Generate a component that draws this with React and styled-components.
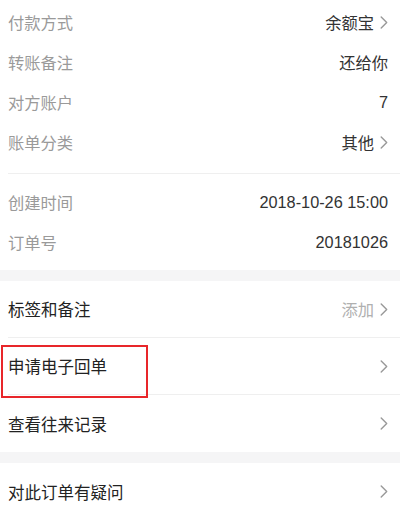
import React from 'react';
import styled, { createGlobalStyle } from 'styled-components';

const GlobalStyle = createGlobalStyle`
  html, body {
    margin: 0;
    padding: 0;
    background: #fff;
    font-family: "Liberation Sans", "Noto Sans CJK SC", sans-serif;
    -webkit-font-smoothing: antialiased;
  }
`;

const Page = styled.div`
  width: 400px;
  height: 520px;
  overflow: hidden;
  background: #fff;
`;

const InfoGroup = styled.div`
  padding: ${({ top }) => top}px 0 ${({ bottom }) => bottom}px;
  border-bottom: ${({ divider }) => (divider ? '1px solid #efefef' : 'none')};
  margin-left: 8px;
`;

const InfoRow = styled.div`
  display: flex;
  align-items: center;
  justify-content: space-between;
  height: 40px;
  padding-right: 12px;
`;

const InfoLabel = styled.span`
  font-size: 16.3px;
  color: #9a9a9a;
`;

const InfoValue = styled.span`
  display: flex;
  align-items: center;
  gap: 6px;
  font-size: 16.3px;
  color: #333;
`;

const Band = styled.div`
  height: 11px;
  background: #f5f5f6;
`;

const ActionRow = styled.div`
  position: relative;
  display: flex;
  align-items: center;
  justify-content: space-between;
  height: 57px;
  margin-left: 8px;
  padding-right: 12px;
  border-bottom: ${({ divider }) => (divider ? '1px solid #efefef' : 'none')};
  box-sizing: border-box;
`;

const ActionLabel = styled.span`
  font-size: 16.5px;
  color: #222;
`;

const Hint = styled.span`
  display: flex;
  align-items: center;
  gap: 6px;
  font-size: 16.3px;
  color: #b0b0b0;
`;

const Highlight = styled.div`
  position: absolute;
  left: -7px;
  top: 7px;
  width: 147px;
  height: 53px;
  border: 2px solid #e8262a;
  box-sizing: border-box;
  pointer-events: none;
`;

const Chevron = () => (
  <svg width="8" height="13" viewBox="0 0 8 13" fill="none">
    <path d="M1.2 1 L6.7 6.5 L1.2 12" stroke="#999" strokeWidth="1.4" strokeLinecap="round" strokeLinejoin="round" />
  </svg>
);

const payment = [
  { label: '付款方式', value: '余额宝', arrow: true },
  { label: '转账备注', value: '还给你' },
  { label: '对方账户', value: '7' },
  { label: '账单分类', value: '其他', arrow: true },
];

const order = [
  { label: '创建时间', value: '2018-10-26 15:00' },
  { label: '订单号', value: '20181026' },
];

const Info = ({ label, value, arrow }) => (
  <InfoRow>
    <InfoLabel>{label}</InfoLabel>
    <InfoValue>
      {value}
      {arrow && <Chevron />}
    </InfoValue>
  </InfoRow>
);

export default function App() {
  return (
    <Page>
      <GlobalStyle />
      <InfoGroup top={2} bottom={11} divider>
        {payment.map((r) => <Info key={r.label} {...r} />)}
      </InfoGroup>
      <InfoGroup top={8} bottom={8}>
        {order.map((r) => <Info key={r.label} {...r} />)}
      </InfoGroup>
      <Band />
      <ActionRow divider>
        <ActionLabel>标签和备注</ActionLabel>
        <Hint>添加<Chevron /></Hint>
      </ActionRow>
      <ActionRow divider>
        <ActionLabel>申请电子回单</ActionLabel>
        <Chevron />
        <Highlight />
      </ActionRow>
      <ActionRow>
        <ActionLabel>查看往来记录</ActionLabel>
        <Chevron />
      </ActionRow>
      <Band />
      <ActionRow>
        <ActionLabel>对此订单有疑问</ActionLabel>
        <Chevron />
      </ActionRow>
    </Page>
  );
}
